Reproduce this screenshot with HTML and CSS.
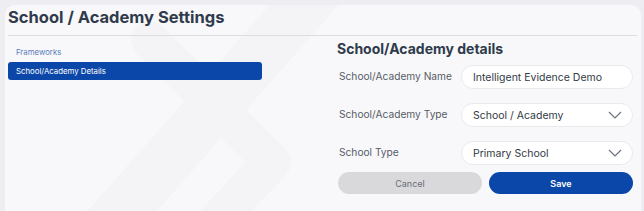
FILE: index.html
```html
<!DOCTYPE html>
<html lang="en">
<head>
  <meta charset="UTF-8">
  <meta name="viewport" content="width=device-width, initial-scale=1.0">
  <title>School / Academy Settings</title>
  <link rel="stylesheet" href="styles.css">
</head>
<body>

  <div class="card">
      <svg class="watermark" width="636" height="206" viewBox="5 5 636 206" aria-hidden="true">
          <path d="M335 -30 L70 270" fill="none" stroke="#f4f4f6" stroke-width="52"/>
          <path d="M150 40 L272 162 L185 255" fill="none" stroke="#f4f4f6" stroke-width="38" stroke-linejoin="round" stroke-linecap="round"/>
      </svg>

      <h1 class="page-title">School / Academy Settings</h1>

      <div class="content">
          <ul class="side-menu">
              <li><a href="#">Frameworks</a></li>
              <li><a href="#" class="active">School/Academy Details</a></li>
          </ul>

          <form class="details">
              <h2>School/Academy details</h2>

              <div class="form-row">
                  <label for="school-name">School/Academy Name</label>
                  <input type="text" id="school-name" value="Intelligent Evidence Demo">
              </div>

              <div class="form-row">
                  <label for="school-kind">School/Academy Type</label>
                  <div class="select-box" id="school-kind">
                      <span>School / Academy</span>
                      <svg width="14" height="8" viewBox="0 0 14 8"><path d="M1 1 L7 7 L13 1" fill="none" stroke="#6b7280" stroke-width="1.2"/></svg>
                  </div>
              </div>

              <div class="form-row">
                  <label for="school-type">School Type</label>
                  <div class="select-box" id="school-type">
                      <span>Primary School</span>
                      <svg width="14" height="8" viewBox="0 0 14 8"><path d="M1 1 L7 7 L13 1" fill="none" stroke="#6b7280" stroke-width="1.2"/></svg>
                  </div>
              </div>

              <div class="actions">
                  <button type="button" class="btn-cancel">Cancel</button>
                  <button type="submit" class="btn-save">Save</button>
              </div>
          </form>
      </div>
  </div>

</body>
</html>
```

FILE: styles.css
```css
* {
  margin: 0;
  padding: 0;
  box-sizing: border-box;
}

body {
  font-family: Inter, "DejaVu Sans", sans-serif;
  background-color: #eeeef2;
  overflow: hidden;
}

.card {
  position: relative;
  margin: 5px 3px 0 5px;
  padding: 0 4px 0 3px;
  height: 206px;
  background-color: #f8f8fa;
  border-radius: 10px 10px 0 0;
  overflow: hidden;
}

.watermark {
  position: absolute;
  top: 0;
  left: 0;
}

.page-title {
  position: relative;
  font-size: 16.5px;
  font-weight: 700;
  color: #2f3b4c;
  line-height: 20px;
  padding: 2px 0 8px;
  border-bottom: 1px solid #dcdce1;
}

.content {
  position: relative;
  display: grid;
  grid-template-columns: 254px 296px;
  column-gap: 75px;
}

.side-menu {
  list-style: none;
  padding-top: 7px;
}

.side-menu li {
  margin-bottom: 1px;
}

.side-menu a {
  display: block;
  height: 18px;
  line-height: 18px;
  padding-left: 8px;
  font-size: 7.8px;
  color: #5a7dbd;
  text-decoration: none;
  border-radius: 3px;
}

.side-menu a.active {
  background-color: #0b47a8;
  color: white;
}

.details h2 {
  font-size: 14px;
  font-weight: 700;
  color: #2f3b4c;
  line-height: 18px;
  margin: 4px 0 7px;
}

.form-row {
  display: grid;
  grid-template-columns: 124px 172px;
  align-items: center;
  margin-bottom: 14px;
}

.form-row label {
  padding-left: 2px;
  font-size: 10.2px;
  color: #555b66;
  margin-top: -2px;
}

.form-row input,
.select-box {
  height: 24px;
  border: 1px solid #e9e9ee;
  border-radius: 12px;
  background-color: white;
  padding: 0 10px 0 11px;
  font-family: inherit;
  font-size: 10.5px;
  color: #333a45;
}

.select-box {
  display: flex;
  align-items: center;
  justify-content: space-between;
}

.actions {
  display: flex;
  gap: 7px;
  margin: -7px 0 0 1px;
}

.actions button {
  flex: 1;
  height: 22px;
  border: none;
  border-radius: 11px;
  font-family: inherit;
  font-size: 9px;
  cursor: pointer;
}

.btn-cancel {
  background-color: #d9d9dc;
  color: #6b6e75;
}

.btn-save {
  background-color: #0b47a8;
  color: white;
  font-weight: 600;
}
```
